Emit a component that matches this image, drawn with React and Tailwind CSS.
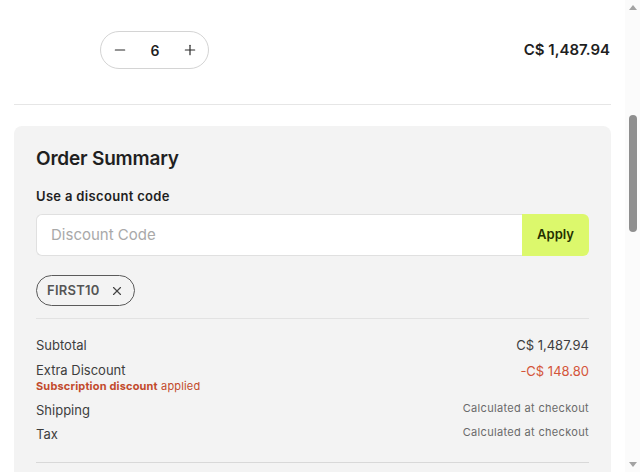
import React from 'react';
import { Minus, Plus, X } from 'lucide-react';

const Scrollbar = () => (
    <div className="w-[15px] h-[472px] shrink-0 flex flex-col items-center bg-[#fbfbfb]">
        <div className="h-[15px] w-full flex items-center justify-center">
            <svg width="8" height="5" viewBox="0 0 8 5"><path d="M0 5 L4 0 L8 5 Z" fill="#a3a3a3" /></svg>
        </div>
        <div className="h-[100px]" />
        <div className="w-[8px] h-[117px] rounded-full bg-[#8f8f8f]" />
        <div className="flex-1" />
        <div className="h-[15px] w-full flex items-center justify-center">
            <svg width="8" height="5" viewBox="0 0 8 5"><path d="M0 0 L8 0 L4 5 Z" fill="#a3a3a3" /></svg>
        </div>
    </div>
);

const App = () => {
    return (
        <div
            className="flex h-[472px] overflow-hidden bg-white text-[#1f1f1f]"
            style={{ fontFamily: 'Inter, "Noto Sans", sans-serif' }}
        >
            <div className="flex-1 min-w-0 px-[14px]">
                <div className="flex items-center justify-between pl-[86px] pt-[31px] pb-[35px] border-b border-[#e6e6e6]">
                    <div className="flex items-center h-[38px] w-[109px] rounded-full border border-[#d4d4d4] justify-between pl-[11px] pr-[10px]">
                        <Minus size={16} strokeWidth={1.8} className="text-[#2a2a2a]" />
                        <span className="text-[14px] font-semibold">6</span>
                        <Plus size={16} strokeWidth={1.8} className="text-[#2a2a2a]" />
                    </div>
                    <span className="text-[15px] font-semibold pr-[1px]">C$ 1,487.94</span>
                </div>

                <div className="pt-[21px]">
                    <div className="rounded-lg bg-[#f3f3f3] px-[22px] pt-[19px] pb-8">
                        <h2 className="text-[19px] font-semibold leading-7 tracking-[-0.01em]">Order Summary</h2>

                        <div className="mt-[13px] text-[13px] font-semibold leading-5 tracking-[0.025em]">Use a discount code</div>
                        <div className="mt-[8px] flex h-[42px]">
                            <input
                                type="text"
                                placeholder="Discount Code"
                                className="flex-1 min-w-0 bg-white border border-[#e0e0e0] border-r-0 rounded-l-md px-[14px] text-[15px] placeholder:text-[#a9a9a9] outline-none"
                            />
                            <button className="w-[67px] bg-[#dcf86c] rounded-r-md text-[13px] font-semibold text-[#253000]">
                                Apply
                            </button>
                        </div>

                        <div className="mt-[19px] flex">
                            <span className="flex items-center gap-[10px] h-[31px] rounded-full border border-[#5a5a5a] pl-[10px] pr-[10px] text-[13px] font-semibold text-[#555555] tracking-[0.02em]">
                                FIRST10
                                <X size={14} strokeWidth={2} className="text-[#444444]" />
                            </span>
                        </div>

                        <div className="mt-[12px] border-t border-[#e2e2e2] pt-[16px] flex flex-col gap-[6px] text-[13px] text-[#3d3d3d]">
                            <div className="flex justify-between leading-[20px]">
                                <span>Subtotal</span>
                                <span>C$ 1,487.94</span>
                            </div>
                            <div className="flex justify-between">
                                <div className="leading-[18px]">
                                    <div>Extra Discount</div>
                                    <div className="text-[11px] leading-[14px] text-[#c24a2c] tracking-[0.015em]">
                                        <span className="font-bold">Subscription discount</span> applied
                                    </div>
                                </div>
                                <span className="leading-[20px] text-[#d4553a]">-C$ 148.80</span>
                            </div>
                            <div className="flex justify-between items-start leading-[20px] mt-[1px]">
                                <span>Shipping</span>
                                <span className="text-[11px] leading-[16px] text-[#6a6a6a] tracking-[0.03em]">Calculated at checkout</span>
                            </div>
                            <div className="flex justify-between items-start leading-[20px] mt-[-2px]">
                                <span>Tax</span>
                                <span className="text-[11px] leading-[16px] text-[#6a6a6a] tracking-[0.03em]">Calculated at checkout</span>
                            </div>
                        </div>

                        <div className="mt-[18px] border-t border-[#d8d8d8] h-[40px]" />
                    </div>
                </div>
            </div>
            <Scrollbar />
        </div>
    );
};

export default App;
